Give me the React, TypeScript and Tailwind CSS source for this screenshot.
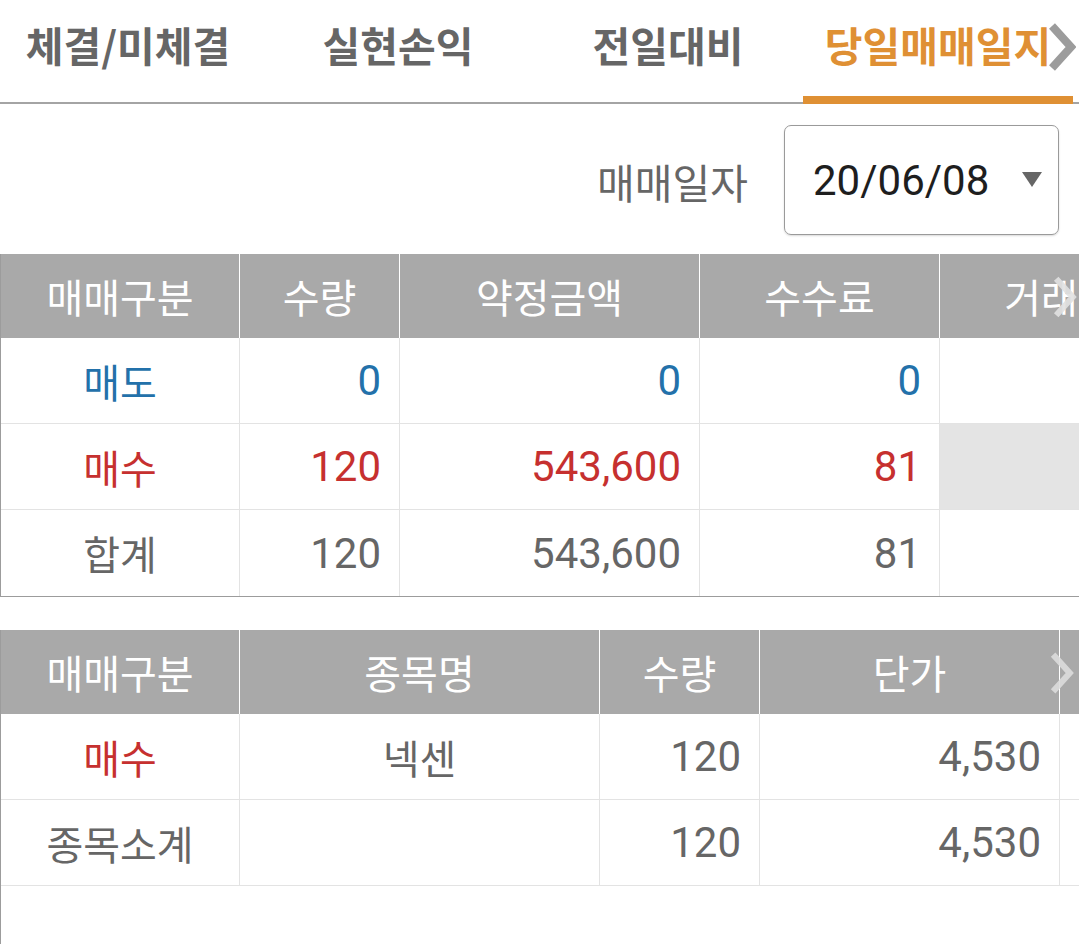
import React from "react";

type Cell = { text: string; kind: "ko" | "num"; color?: string; bg?: string };

const BLUE = "text-[#2371aa]";
const RED = "text-[#c6302f]";
const GRAY = "text-[#666666]";

function Chevron({ className, color, sw }: { className: string; color: string; sw: number }) {
  return (
    <svg className={className} viewBox="0 0 30 48" fill="none">
      <polyline points="6,3 25,24 6,45" stroke={color} strokeWidth={sw} strokeLinejoin="miter" />
    </svg>
  );
}

function HeaderRow({ cols, labels }: { cols: number[]; labels: string[] }) {
  return (
    <div className="flex h-[84px] bg-[#a9a9a9]">
      {cols.map((w, i) => (
        <div
          key={i}
          style={{ width: w }}
          className="shrink-0 h-full flex items-center justify-center border-r border-white text-white text-[40px] font-['Noto_Sans_CJK_KR',sans-serif] whitespace-nowrap overflow-hidden"
        >
          {labels[i]}
        </div>
      ))}
    </div>
  );
}

function BodyRow({ cols, cells }: { cols: number[]; cells: (Cell | null)[] }) {
  return (
    <div className="flex h-[86px] border-b border-[#e3e3e3]">
      {cols.map((w, i) => {
        const c = cells[i];
        const isNum = c?.kind === "num";
        return (
          <div
            key={i}
            style={{ width: w }}
            className={`shrink-0 h-full flex items-center border-r border-[#e3e3e3] whitespace-nowrap ${
              isNum ? "justify-end pr-[18px] text-[42px] font-['Roboto',sans-serif]" : "justify-center text-[40px] font-['Noto_Sans_CJK_KR',sans-serif]"
            } ${c?.color ?? GRAY} ${c?.bg ?? ""}`}
          >
            {c?.text ?? ""}
          </div>
        );
      })}
    </div>
  );
}

export default function App() {
  const c1 = [239, 160, 300, 240, 240];
  const c2 = [239, 360, 160, 300, 200];
  const tabs = ["체결/미체결", "실현손익", "전일대비", "당일매매일지"];

  return (
    <div className="w-[1079px] h-[944px] bg-white overflow-hidden relative font-['Noto_Sans_CJK_KR',sans-serif]">
      {/* Tabs */}
      <div className="relative h-[104px] border-b-2 border-[#a4a4a4]">
        <div className="flex ml-[-7px] h-full">
          {tabs.map((t, i) => (
            <div key={t} className="relative w-[270px] shrink-0 h-full flex items-center justify-center pb-[14px]">
              <span
                className={`text-[41px] font-bold leading-none whitespace-nowrap ${
                  i === 3 ? "text-[#df9034]" : "text-[#666666]"
                }`}
              >
                {t}
              </span>
              {i === 3 && <div className="absolute left-0 right-0 bottom-[-2px] h-[8px] bg-[#df9034]" />}
            </div>
          ))}
        </div>
        <Chevron className="absolute left-[1046px] top-[23px] w-[30px] h-[48px]" color="#9c9c9c" sw={8} />
      </div>

      {/* Date row */}
      <div className="flex items-center justify-end pr-[20px] pt-[21px] pb-[19px]">
        <span className="text-[41px] text-[#666666] mr-[36px] mt-[4px]">매매일자</span>
        <div className="w-[275px] h-[110px] border border-[#9a9a9a] rounded-[7px] shadow-[0_1px_2px_rgba(0,0,0,0.15)] flex items-center pl-[28px] pr-[16px]">
          <span className="text-[42px] text-[#1e1e1e] font-['Roboto',sans-serif] flex-1">20/06/08</span>
          <svg width="20" height="16" viewBox="0 0 20 16">
            <polygon points="0,0 20,0 10,15" fill="#666666" />
          </svg>
        </div>
      </div>

      {/* Table 1 */}
      <div className="relative border-l border-b border-[#9c9c9c]">
        <HeaderRow cols={c1} labels={["매매구분", "수량", "약정금액", "수수료", "거래세"]} />
        <BodyRow
          cols={c1}
          cells={[
            { text: "매도", kind: "ko", color: BLUE },
            { text: "0", kind: "num", color: BLUE },
            { text: "0", kind: "num", color: BLUE },
            { text: "0", kind: "num", color: BLUE },
            null,
          ]}
        />
        <BodyRow
          cols={c1}
          cells={[
            { text: "매수", kind: "ko", color: RED },
            { text: "120", kind: "num", color: RED },
            { text: "543,600", kind: "num", color: RED },
            { text: "81", kind: "num", color: RED },
            { text: "", kind: "num", bg: "bg-[#e4e4e4]" },
          ]}
        />
        <div className="[&>div]:border-b-0">
          <BodyRow
            cols={c1}
            cells={[
              { text: "합계", kind: "ko" },
              { text: "120", kind: "num" },
              { text: "543,600", kind: "num" },
              { text: "81", kind: "num" },
              null,
            ]}
          />
        </div>
        <Chevron className="absolute left-[1050px] top-[21px] w-[26px] h-[44px]" color="rgba(225,225,225,0.9)" sw={7} />
      </div>

      {/* Table 2 */}
      <div className="relative mt-[33px] border-l border-[#9c9c9c] h-[330px]">
        <HeaderRow cols={c2} labels={["매매구분", "종목명", "수량", "단가", ""]} />
        <BodyRow
          cols={c2}
          cells={[
            { text: "매수", kind: "ko", color: RED },
            { text: "넥센", kind: "ko" },
            { text: "120", kind: "num" },
            { text: "4,530", kind: "num" },
            null,
          ]}
        />
        <BodyRow
          cols={c2}
          cells={[
            { text: "종목소계", kind: "ko" },
            null,
            { text: "120", kind: "num" },
            { text: "4,530", kind: "num" },
            null,
          ]}
        />
        <Chevron className="absolute left-[1046px] top-[22px] w-[28px] h-[42px]" color="rgba(220,220,220,0.9)" sw={7} />
      </div>
    </div>
  );
}
